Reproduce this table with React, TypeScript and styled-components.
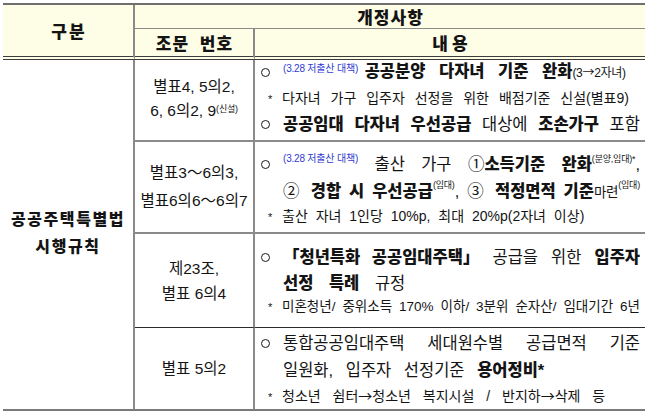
import styled, { createGlobalStyle } from 'styled-components';

const GlobalStyle = createGlobalStyle`
  *, *::before, *::after { box-sizing: border-box; }
  html, body { margin: 0; padding: 0; background: #ffffff; }
  body {
    font-family: "Liberation Sans", "Noto Sans CJK KR", sans-serif;
    color: #141414;
  }
`;

const LINE = '#8a8a8a';
const HEAD_BG = '#fefde6';

const Table = styled.div`
  display: grid;
  grid-template-columns: 132px 120px 390px;
  grid-template-rows: 24px 31px 82px 92px 94px 81px;
  width: 642px;
  margin: 3px 0 0 3px;
  border-top: 2px solid #6f6f6f;
  border-bottom: 2px solid #7a7a7a;
`;

const HeadCell = styled.div<{ $col: string; $row: string; $right?: boolean; $double?: boolean }>`
  grid-column: ${({ $col }) => $col};
  grid-row: ${({ $row }) => $row};
  display: flex;
  align-items: center;
  justify-content: center;
  background: ${HEAD_BG};
  font-weight: 900;
  font-size: 17px;
  border-right: ${({ $right }) => ($right ? `2px solid ${LINE}` : 'none')};
  border-bottom: ${({ $double }) => ($double ? '4px double #3c3c3c' : `1px solid ${LINE}`)};
`;

const HeadText = styled.span<{ $ls?: number; $ws?: number }>`
  letter-spacing: ${({ $ls = 0 }) => $ls}px;
  word-spacing: ${({ $ws = 0 }) => $ws}px;
  padding-left: ${({ $ls = 0 }) => $ls}px;
`;

const LawCell = styled.div`
  grid-column: 1;
  grid-row: 3 / 7;
  display: flex;
  flex-direction: column;
  justify-content: center;
  align-items: center;
  padding-bottom: 4px;
  border-right: 2px solid ${LINE};
  font-size: 16px;
  font-weight: 900;
  line-height: 27px;
  letter-spacing: 1.6px;
`;

const ArticleCell = styled.div<{ $lh: number; $pb?: number; $rule?: string }>`
  grid-column: 2;
  display: flex;
  flex-direction: column;
  justify-content: center;
  align-items: center;
  padding-bottom: ${({ $pb = 0 }) => $pb}px;
  border-right: 2px solid ${LINE};
  border-bottom: ${({ $rule }) => $rule ?? 'none'};
  font-size: 15.5px;
  line-height: ${({ $lh }) => $lh}px;
  text-align: center;
`;

const ContentCell = styled.div<{ $pt: number; $gap: number; $rule?: string }>`
  grid-column: 3;
  display: flex;
  flex-direction: column;
  gap: ${({ $gap }) => $gap}px;
  padding: ${({ $pt }) => $pt}px 5px 0 6px;
  border-bottom: ${({ $rule }) => $rule ?? 'none'};
`;

const Item = styled.div`
  display: flex;
  align-items: center;
  height: 20px;
`;

const Marker = styled.span`
  flex-shrink: 0;
  width: 9px;
  height: 9px;
  margin-right: 13px;
  border: 1.4px solid #1a1a1a;
  border-radius: 50%;
`;

const Text = styled.div<{ $justify?: boolean; $ws?: number }>`
  flex: 1;
  font-size: 16.5px;
  line-height: 20px;
  white-space: nowrap;
  word-spacing: ${({ $ws = 0 }) => $ws}px;
  text-align: ${({ $justify }) => ($justify ? 'justify' : 'left')};
  text-align-last: ${({ $justify }) => ($justify ? 'justify' : 'auto')};
`;

const Cont = styled(Text)`
  flex: none;
  height: 20px;
  padding-left: 22px;
`;

/* keeps a phrase together so justification only widens the gaps around it */
const Tight = styled.span<{ $ws?: number }>`
  display: inline-block;
  word-spacing: ${({ $ws = 0 }) => $ws}px;
`;

const Note = styled.div<{ $ws?: number; $size?: number; $justify?: boolean }>`
  height: 18px;
  padding-left: 7px;
  font-size: ${({ $size = 14 }) => $size}px;
  line-height: 18px;
  white-space: nowrap;
  word-spacing: ${({ $ws = 0 }) => $ws}px;
  text-align: ${({ $justify }) => ($justify ? 'justify' : 'left')};
  text-align-last: ${({ $justify }) => ($justify ? 'justify' : 'auto')};
`;

const Star = styled.span`
  display: inline-block;
  width: 14px;
  font-size: 11px;
  word-spacing: 0;
`;

const Arrow = styled.span`
  font-family: "Noto Sans CJK KR", sans-serif;
  font-weight: 400;
`;

const B = styled.b`
  font-weight: 900;
`;

const Small = styled.span<{ $size?: number }>`
  font-size: ${({ $size = 12 }) => $size}px;
  font-weight: 400;
  letter-spacing: -0.3px;
`;

const Sup = styled.span<{ $size?: number; $raise?: number; $blue?: boolean }>`
  display: inline-block;
  font-size: ${({ $size = 9 }) => $size}px;
  font-weight: 400;
  line-height: 1;
  vertical-align: ${({ $raise = 5 }) => $raise}px;
  color: ${({ $blue }) => ($blue ? '#2f3bd0' : '#141414')};
  white-space: nowrap;
  word-spacing: 0;
  letter-spacing: -0.2px;
`;

const GRAY_RULE = `2px solid ${LINE}`;
const DARK_RULE = '1px solid #2a2a2a';

export default function App() {
  return (
    <>
      <GlobalStyle />
      <Table>
        <HeadCell $col="1" $row="1 / 3" $right $double>
          <HeadText $ls={2}>구분</HeadText>
        </HeadCell>
        <HeadCell $col="2 / 4" $row="1">
          <HeadText $ls={1}>개정사항</HeadText>
        </HeadCell>
        <HeadCell $col="2" $row="2" $right $double>
          <HeadText $ls={1} $ws={5}>조문 번호</HeadText>
        </HeadCell>
        <HeadCell $col="3" $row="2" $double>
          <HeadText $ls={4}>내용</HeadText>
        </HeadCell>

        <LawCell>
          <span>공공주택특별법</span>
          <span>시행규칙</span>
        </LawCell>

        <ArticleCell $lh={23.5} $pb={3} $rule={GRAY_RULE}>
          <span>별표4, 5의2,</span>
          <span>
            6, 6의2, 9<Sup $raise={4}>(신설)</Sup>
          </span>
        </ArticleCell>
        <ContentCell $pt={2} $gap={7} $rule={GRAY_RULE}>
          <Item>
            <Marker />
            <Text $ws={2}>
              <Sup $blue $size={10} $raise={5}>(3.28 저출산 대책)</Sup>{' '}
              <Tight $ws={9}>
                <B>공공분양 다자녀 기준 완화</B>
                <Small>(3<Arrow>→</Arrow>2자녀)</Small>
              </Tight>
            </Text>
          </Item>
          <Note $ws={6}>
            <Star>*</Star>다자녀 가구 입주자 선정을 위한 배점기준 신설(별표9)
          </Note>
          <Item>
            <Marker />
            <Text $justify>
              <B>공공임대 다자녀 우선공급</B> 대상에 <B>조손가구</B> 포함
            </Text>
          </Item>
        </ContentCell>

        <ArticleCell $lh={28} $rule={GRAY_RULE}>
          <span>별표3～6의3,</span>
          <span>별표6의6～6의7</span>
        </ArticleCell>
        <ContentCell $pt={12} $gap={6.5} $rule={GRAY_RULE}>
          <Item>
            <Marker />
            <Text $justify>
              <Sup $blue $size={10} $raise={8}>(3.28 저출산 대책)</Sup> 출산 가구{' '}
              <Tight>
                ①<B>소득기준</B>
              </Tight>{' '}
              <Tight>
                <B>완화</B>
                <Sup $raise={8}>(분양,임대)*</Sup>,
              </Tight>
            </Text>
          </Item>
          <Cont $justify>
            ② <B>경합 시 우선공급</B>
            <Sup $raise={9}>(임대)</Sup>, ③ <B>적정면적 기준</B>
            <Small $size={13.5}>마련</Small>
            <Sup $raise={9}>(임대)</Sup>
          </Cont>
          <Note $ws={4}>
            <Star>*</Star>출산 자녀 1인당 10%p, 최대 20%p(2자녀 이상)
          </Note>
        </ContentCell>

        <ArticleCell $lh={25} $rule={DARK_RULE}>
          <span>제23조,</span>
          <span>별표 6의4</span>
        </ArticleCell>
        <ContentCell $pt={13} $gap={5.5} $rule={DARK_RULE}>
          <Item>
            <Marker />
            <Text $justify>
              <Tight $ws={7}>
                <B>「청년특화 공공임대주택」</B>
              </Tight>{' '}
              공급을 위한 <B>입주자</B>
            </Text>
          </Item>
          <Cont $ws={11}>
            <B>선정 특례</B> 규정
          </Cont>
          <Note $size={13.5} $justify>
            <Star>*</Star>미혼청년/ 중위소득 170% 이하/ 3분위 순자산/ 임대기간 6년
          </Note>
        </ContentCell>

        <ArticleCell $lh={25}>
          <span>별표 5의2</span>
        </ArticleCell>
        <ContentCell $pt={5} $gap={6.5}>
          <Item>
            <Marker />
            <Text $justify>통합공공임대주택 세대원수별 공급면적 기준</Text>
          </Item>
          <Cont $ws={8}>
            일원화, 입주자 선정기준 <B>용어정비*</B>
          </Cont>
          <Note $ws={8}>
            <Star>*</Star>청소년 쉼터<Arrow>→</Arrow>청소년 복지시설 / 반지하<Arrow>→</Arrow>삭제 등
          </Note>
        </ContentCell>
      </Table>
    </>
  );
}
